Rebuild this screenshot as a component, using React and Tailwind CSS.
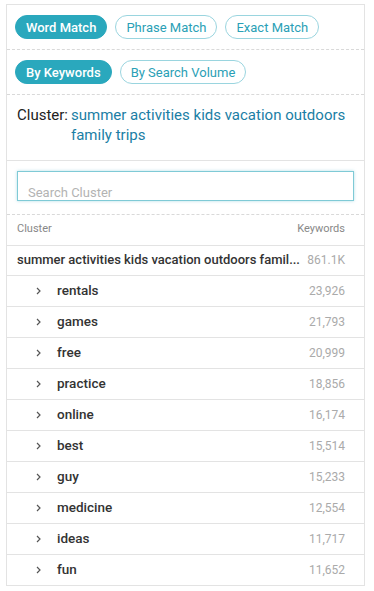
import { useState } from 'react'

const rows = [
  ['rentals', '23,926'],
  ['games', '21,793'],
  ['free', '20,999'],
  ['practice', '18,856'],
  ['online', '16,174'],
  ['best', '15,514'],
  ['guy', '15,233'],
  ['medicine', '12,554'],
  ['ideas', '11,717'],
  ['fun', '11,652'],
]

function Pill({ active, children, onClick }) {
  return (
    <button
      onClick={onClick}
      className={
        active
          ? 'h-[24px] px-[10px] rounded-full bg-[#2aa8bd] border border-[#2aa8bd] text-white text-[13px] font-medium leading-none'
          : 'h-[24px] px-[10px] rounded-full bg-white border border-[#9ad5df] text-[#2a9fb6] text-[13px] leading-none'
      }
    >
      {children}
    </button>
  )
}

function Chevron() {
  return (
    <svg width="5" height="8" viewBox="0 0 5 8" className="text-[#555] shrink-0">
      <path d="M1 1l3 3-3 3" fill="none" stroke="currentColor" strokeWidth="1.2" />
    </svg>
  )
}

export default function App() {
  const [match, setMatch] = useState('word')
  const [sort, setSort] = useState('keywords')

  return (
    <div className="pt-[4px] pl-[6px] bg-white min-h-screen" style={{ fontFamily: 'Roboto, "Liberation Sans", sans-serif' }}>
      <div className="w-[359px] border-t border-l border-r border-[#e3e3e3]">
        <div className="flex gap-[8px] px-[8px] pt-[10px] pb-[10px] border-b border-dashed border-[#d9d9d9]">
          <Pill active={match === 'word'} onClick={() => setMatch('word')}>Word Match</Pill>
          <Pill active={match === 'phrase'} onClick={() => setMatch('phrase')}>Phrase Match</Pill>
          <Pill active={match === 'exact'} onClick={() => setMatch('exact')}>Exact Match</Pill>
        </div>
        <div className="flex gap-[8px] px-[8px] pt-[10px] pb-[10px] border-b border-dashed border-[#d9d9d9]">
          <Pill active={sort === 'keywords'} onClick={() => setSort('keywords')}>By Keywords</Pill>
          <Pill active={sort === 'volume'} onClick={() => setSort('volume')}>By Search Volume</Pill>
        </div>
        <div className="flex gap-[3px] pl-[10px] pr-[10px] pt-[10px] pb-[15px] text-[15px] leading-[20px] border-b border-[#e3e3e3]">
          <span className="text-[#222] shrink-0">Cluster:</span>
          <span className="text-[#1a7ea5]">summer activities kids vacation outdoors family trips</span>
        </div>
        <div className="px-[10px] pt-[10px] pb-[10px] border-b border-dashed border-[#d9d9d9]">
          <input
            placeholder="Search Cluster"
            className="w-full h-[30px] border border-[#7fcad6] shadow-[0_0_3px_rgba(127,202,214,0.6)] pl-[10px] pt-[12px] text-[13px] text-[#333] placeholder:text-[#b3b3b3] outline-none"
          />
        </div>
        <div className="flex justify-between items-center h-[31px] pl-[10px] pr-[19px] text-[11px] text-[#888] border-b border-[#e3e3e3]">
          <span>Cluster</span>
          <span>Keywords</span>
        </div>
        <div className="flex justify-between items-center h-[30px] pl-[10px] pr-[19px] border-b border-[#e3e3e3]">
          <span className="text-[13px] font-medium text-[#333] whitespace-nowrap">summer activities kids vacation outdoors famil...</span>
          <span className="text-[12px] text-[#aaa] shrink-0">861.1K</span>
        </div>
        {rows.map(([name, count]) => (
          <div key={name} className="flex items-center h-[31px] pl-[29px] pr-[19px] border-b border-[#e3e3e3]">
            <Chevron />
            <span className="ml-[16px] text-[13.5px] font-medium text-[#333]">{name}</span>
            <span className="ml-auto text-[12px] text-[#aaa]">{count}</span>
          </div>
        ))}
      </div>
    </div>
  )
}
